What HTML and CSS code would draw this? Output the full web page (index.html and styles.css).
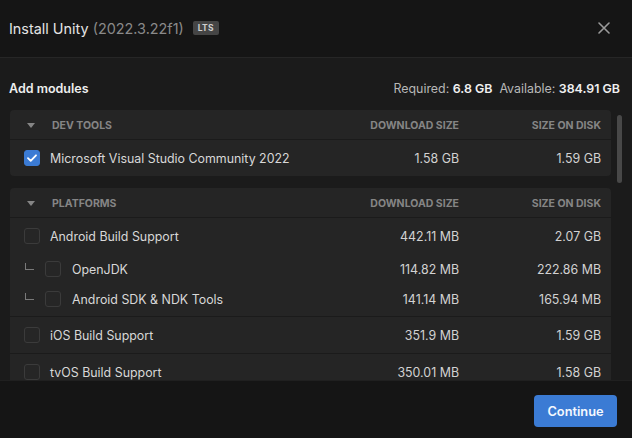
FILE: index.html
```html
<!DOCTYPE html>
<html>
<head>
<meta charset="utf-8">
<link rel="stylesheet" href="styles.css">
</head>
<body>
<div class="dialog">
  <header class="header">
    <div class="title">Install Unity <span class="version">(2022.3.22f1)</span><span class="badge">LTS</span></div>
    <svg class="close" width="12" height="12" viewBox="0 0 12 12"><path d="M1 1L11 11M11 1L1 11" stroke="#9a9a9a" stroke-width="1.6" stroke-linecap="round"/></svg>
  </header>
  <main class="content">
    <div class="info">
      <span class="heading">Add modules</span>
      <span class="space">Required: <b>6.8 GB</b>&nbsp; Available: <b>384.91 GB</b></span>
    </div>
    <div class="scroller">
      <div class="list">
        <section class="panel">
          <div class="phead">
            <span class="tri"></span>
            <span class="pname">DEV TOOLS</span>
            <span class="col">DOWNLOAD SIZE</span>
            <span class="col disk">SIZE ON DISK</span>
          </div>
          <div class="row">
            <span class="cb checked"><svg width="10" height="8" viewBox="0 0 10 8"><path d="M1 4.2L3.7 6.8L9 1.3" fill="none" stroke="#fff" stroke-width="1.8" stroke-linecap="round" stroke-linejoin="round"/></svg></span>
            <span class="label">Microsoft Visual Studio Community 2022</span>
            <span class="num">1.58 GB</span>
            <span class="num disk">1.59 GB</span>
          </div>
        </section>
        <section class="panel">
          <div class="phead">
            <span class="tri"></span>
            <span class="pname">PLATFORMS</span>
            <span class="col">DOWNLOAD SIZE</span>
            <span class="col disk">SIZE ON DISK</span>
          </div>
          <div class="group">
            <div class="row">
              <span class="cb"></span>
              <span class="label">Android Build Support</span>
              <span class="num">442.11 MB</span>
              <span class="num disk">2.07 GB</span>
            </div>
            <div class="row sub">
              <span class="elbow"></span>
              <span class="cb"></span>
              <span class="label">OpenJDK</span>
              <span class="num">114.82 MB</span>
              <span class="num disk">222.86 MB</span>
            </div>
            <div class="row sub">
              <span class="elbow"></span>
              <span class="cb"></span>
              <span class="label">Android SDK &amp; NDK Tools</span>
              <span class="num">141.14 MB</span>
              <span class="num disk">165.94 MB</span>
            </div>
          </div>
          <div class="group">
            <div class="row">
              <span class="cb"></span>
              <span class="label">iOS Build Support</span>
              <span class="num">351.9 MB</span>
              <span class="num disk">1.59 GB</span>
            </div>
          </div>
          <div class="group">
            <div class="row">
              <span class="cb"></span>
              <span class="label">tvOS Build Support</span>
              <span class="num">350.01 MB</span>
              <span class="num disk">1.58 GB</span>
            </div>
          </div>
        </section>
      </div>
      <div class="track"><div class="thumb"></div></div>
    </div>
  </main>
  <footer class="footer">
    <button class="continue">Continue</button>
  </footer>
</div>
</body>
</html>
```

FILE: styles.css
```css
* { box-sizing: border-box; }
html, body { margin: 0; padding: 0; }
body {
  width: 632px;
  height: 438px;
  overflow: hidden;
  background: #1b1b1b;
  font-family: Inter, "Noto Sans", sans-serif;
  color: #d6d6d6;
}
.dialog {
  display: flex;
  flex-direction: column;
  height: 438px;
}
.header {
  height: 58px;
  flex: none;
  background: #151515;
  border-bottom: 1px solid #262626;
  display: flex;
  align-items: center;
  justify-content: space-between;
  padding: 0 22px 1px 9px;
}
.title {
  font-size: 14.4px;
  color: #e4e4e4;
  display: flex;
  align-items: center;
  white-space: pre;
}
.version { color: #8a8a8a; }
.badge {
  margin-left: 9px;
  background: #454545;
  color: #cfcfcf;
  font-size: 8.5px;
  font-weight: 700;
  letter-spacing: 0.3px;
  height: 14px;
  line-height: 14px;
  padding: 0 5px;
  border-radius: 2px;
}
.close { display: block; }
.content {
  flex: 1;
  overflow: hidden;
  display: flex;
  flex-direction: column;
}
.info {
  display: flex;
  justify-content: space-between;
  align-items: center;
  height: 52px;
  padding: 8px 12px 0 9px;
  flex: none;
}
.heading { font-size: 12.5px; font-weight: 600; color: #eeeeee; }
.space { font-size: 12.4px; color: #b8b8b8; }
.space b { color: #f0f0f0; font-weight: 600; }
.scroller {
  flex: 1;
  display: flex;
  overflow: hidden;
  padding-left: 10px;
}
.list {
  width: 601px;
  display: flex;
  flex-direction: column;
  gap: 12px;
}
.panel {
  background: #252525;
  border-radius: 4px;
  flex: none;
}
.phead {
  height: 30px;
  display: flex;
  align-items: center;
  padding: 1px 10px 0 17px;
  border-bottom: 1px solid #1b1b1b;
  font-size: 10.5px;
  font-weight: 700;
  color: #858585;
}
.tri {
  width: 0;
  height: 0;
  border-left: 4px solid transparent;
  border-right: 4px solid transparent;
  border-top: 5px solid #858585;
  margin-right: 17px;
}
.pname { flex: 1; }
.col { width: 150px; text-align: right; }
.col.disk, .num.disk { width: 142px; }
.group {
  border-bottom: 1px solid #1b1b1b;
}
.group:last-child { border-bottom: none; }
.group .row.sub:last-child { margin-bottom: 2px; }
.row {
  height: 36px;
  display: flex;
  align-items: center;
  padding: 0 10px 0 14px;
  font-size: 12.4px;
  white-space: nowrap;
}
.row.sub { height: 30px; }
.elbow {
  width: 9px;
  height: 7px;
  border-left: 1.5px solid #7a7a7a;
  border-bottom: 1.5px solid #7a7a7a;
  margin: -6px 11px 0 1px;
}
.cb {
  width: 16px;
  height: 16px;
  border-radius: 3px;
  border: 1px solid #3b3b3b;
  background: #262626;
  margin-right: 10px;
  display: flex;
  align-items: center;
  justify-content: center;
  flex: none;
}
.row.sub .cb { margin-right: 11px; }
.cb.checked {
  background: #3b7bd4;
  border-color: #3b7bd4;
}
.label { flex: 1; color: #d8d8d8; }
.num { width: 150px; text-align: right; color: #d2d2d2; }
.track {
  width: 11px;
  padding-left: 6px;
  padding-top: 5px;
}
.thumb {
  width: 5px;
  height: 68px;
  background: #484848;
  border-radius: 3px;
}
.footer {
  height: 58px;
  flex: none;
  background: #151515;
  border-top: 1px solid #202020;
  display: flex;
  align-items: flex-start;
  justify-content: flex-end;
  padding: 14px 15px 0 0;
}
.continue {
  width: 83px;
  height: 32px;
  border: none;
  border-radius: 4px;
  background: #3b7bd4;
  color: #f4f8ff;
  font-family: Inter, "Noto Sans", sans-serif;
  font-size: 12.8px;
  font-weight: 600;
}
```
